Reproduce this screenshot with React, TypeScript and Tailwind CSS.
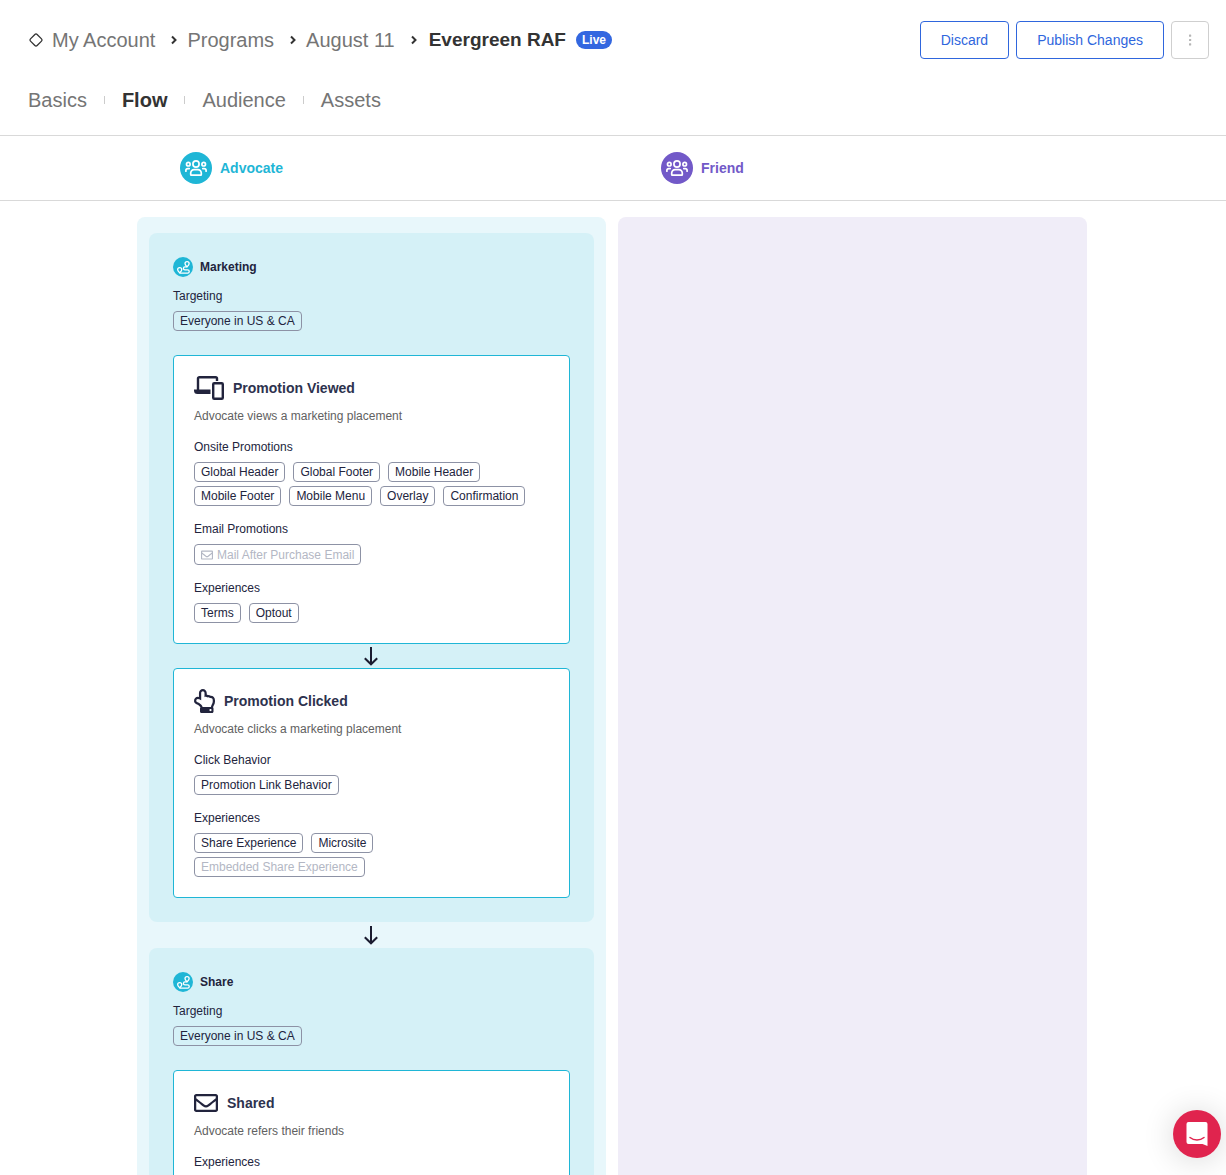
import { type ReactNode } from "react";
import { FaRegEnvelope, FaRegHandPointUp } from "react-icons/fa";
import clsx from "clsx";

type Tag = { label: string; muted?: boolean; mail?: boolean };
type Group = { title: string; tags: Tag[] };
type Step = {
  title: string;
  description: string;
  icon: ReactNode;
  groups: Group[];
};
type Stage = { title: string; targeting: string; steps: Step[] };

const tabs = ["Basics", "Flow", "Audience", "Assets"];

const stages: Stage[] = [
  {
    title: "Marketing",
    targeting: "Everyone in US & CA",
    steps: [
      {
        title: "Promotion Viewed",
        description: "Advocate views a marketing placement",
        icon: <DevicesIcon />,
        groups: [
          {
            title: "Onsite Promotions",
            tags: [
              { label: "Global Header" },
              { label: "Global Footer" },
              { label: "Mobile Header" },
              { label: "Mobile Footer" },
              { label: "Mobile Menu" },
              { label: "Overlay" },
              { label: "Confirmation" },
            ],
          },
          {
            title: "Email Promotions",
            tags: [{ label: "Mail After Purchase Email", muted: true, mail: true }],
          },
          { title: "Experiences", tags: [{ label: "Terms" }, { label: "Optout" }] },
        ],
      },
      {
        title: "Promotion Clicked",
        description: "Advocate clicks a marketing placement",
        icon: <FaRegHandPointUp className="h-6 w-[21px]" />,
        groups: [
          { title: "Click Behavior", tags: [{ label: "Promotion Link Behavior" }] },
          {
            title: "Experiences",
            tags: [
              { label: "Share Experience" },
              { label: "Microsite" },
              { label: "Embedded Share Experience", muted: true },
            ],
          },
        ],
      },
    ],
  },
  {
    title: "Share",
    targeting: "Everyone in US & CA",
    steps: [
      {
        title: "Shared",
        description: "Advocate refers their friends",
        icon: <FaRegEnvelope className="size-6" />,
        groups: [{ title: "Experiences", tags: [] }],
      },
    ],
  },
];

function DevicesIcon() {
  return (
    <svg viewBox="0 0 30 24" className="h-6 w-[30px]" fill="none" stroke="currentColor">
      <path d="M4 15V2.6C4 1.8 4.6 1.2 5.4 1.2h16.2c.8 0 1.4.6 1.4 1.4V5" strokeWidth="2.4" />
      <path d="M0 13.600h16.500V18H3.500A3.500 3.500 0 0 1 0 14.500z" fill="currentColor" stroke="none" />
      <rect x="19.200" y="7.200" width="9.600" height="15.600" rx="1" strokeWidth="2.400" />
    </svg>
  );
}

function UsersIcon() {
  return (
    <svg viewBox="0 0 22 16" className="h-4 w-[22px]" fill="none" stroke="currentColor" strokeWidth="1.700">
      <circle cx="11" cy="4" r="3.100" />
      <circle cx="3.300" cy="4.200" r="1.800" />
      <circle cx="18.700" cy="4.200" r="1.800" />
      <path d="M5.700 14.600V13a3.400 3.400 0 0 1 3.400-3.400h3.800a3.400 3.400 0 0 1 3.400 3.400v1.600c0 .4-.2.600-.6.600H6.300c-.4 0-.6-.2-.6-.600z" />
      <path d="M.9 11.200v-.6a2 2 0 0 1 2-2h1.300M21.100 11.200v-.6a2 2 0 0 0-2-2h-1.300" strokeLinecap="round" />
    </svg>
  );
}

function RouteIcon() {
  return (
    <svg viewBox="0 0 12 12" className="size-[13px]" fill="none" stroke="currentColor" strokeWidth="1.200">
      <path d="M9.300 5.400C8.100 4.100 7.400 3.300 7.400 2.500a1.900 1.900 0 0 1 3.800 0c0 .8-.7 1.600-1.900 2.900z" />
      <path d="M2.500 11C1.300 9.700.6 8.900.6 8.100a1.900 1.900 0 0 1 3.800 0c0 .8-.7 1.600-1.900 2.900z" />
      <path d="M9.300 5.500H7.300a1.300 1.300 0 0 0 0 2.700h2.500a1.500 1.500 0 0 1 0 3H2.500" />
    </svg>
  );
}

function Chevron({ className }: { className?: string }) {
  return (
    <svg viewBox="0 0 6 10" className={clsx("h-2.5 w-1.5 text-[#333]", className)} fill="none" stroke="currentColor" strokeWidth="2">
      <path d="M1 1.500 4.500 5 1 8.500" />
    </svg>
  );
}

function DownArrow({ className }: { className: string }) {
  return (
    <div className={clsx("flex items-center justify-center pr-px text-[#1b1c30]", className)}>
      <svg viewBox="0 0 14 20" className="h-5 w-3.5" fill="none" stroke="currentColor" strokeWidth="2">
        <path d="M7 1v17M.8 12.200 7 18.300l6.200-6.100" />
      </svg>
    </div>
  );
}

function Pill({ label, muted, mail }: Tag) {
  return (
    <button
      type="button"
      className={clsx(
        "flex items-center gap-1 rounded-sm border border-[#8d92a5] px-1.5 text-xs",
        mail ? "h-[21px]" : "h-5",
        muted ? "text-[#b3b7c4]" : "text-[#22243d]"
      )}
    >
      {mail && <FaRegEnvelope className="size-3" />}
      {label}
    </button>
  );
}

function StepCard({ step }: { step: Step }) {
  return (
    <article className="rounded border border-[#1fb6d6] bg-white p-5 text-[#22243d]">
      <div className="flex h-6 items-center gap-[9px]">
        {step.icon}
        <h3 className="text-sm font-bold text-[#2d324e]">{step.title}</h3>
      </div>
      <p className="mt-2 text-xs leading-4 text-[#616161]">{step.description}</p>
      {step.groups.map((group) => (
        <div key={group.title} className="mt-3.5">
          <h4 className="text-xs leading-[18px]">{group.title}</h4>
          <div className="mt-1.5 flex flex-wrap gap-x-2 gap-y-1">
            {group.tags.map((tag) => (
              <Pill key={tag.label} {...tag} />
            ))}
          </div>
        </div>
      ))}
    </article>
  );
}

function StageBlock({ stage }: { stage: Stage }) {
  return (
    <section className="rounded-lg bg-[#d5f1f7] p-6 text-[#22243d]">
      <div className="flex items-center gap-[7px]">
        <span className="flex size-5 items-center justify-center rounded-full bg-[#1fb6d6] text-white">
          <RouteIcon />
        </span>
        <h2 className="text-xs font-bold">{stage.title}</h2>
      </div>
      <p className="mt-2.5 text-xs leading-[18px]">Targeting</p>
      <div className="mt-1.5 mb-6 flex">
        <Pill label={stage.targeting} />
      </div>
      {stage.steps.map((step, index) => (
        <div key={step.title}>
          {index > 0 && <DownArrow className="h-6" />}
          <StepCard step={step} />
        </div>
      ))}
    </section>
  );
}

function Header() {
  return (
    <header className="border-b border-[#d9d9d9] pt-[21px] pr-[17px] pb-5 pl-7">
      <div className="flex items-center justify-between">
        <nav aria-label="Breadcrumb" className="flex items-center text-xl text-[#757575]">
          <svg viewBox="0 0 16 16" className="mr-2 size-4" fill="none" stroke="#333" strokeWidth="1.300">
            <rect x="3.300" y="3.300" width="9.400" height="9.400" rx="1.600" transform="rotate(45 8 8)" />
          </svg>
          <a href="#account">My Account</a>
          <Chevron className="mr-2.5 ml-4" />
          <a href="#programs">Programs</a>
          <Chevron className="mr-2.5 ml-4" />
          <a href="#august">August 11</a>
          <Chevron className="mr-3 ml-4" />
          <h1 className="text-[19px] font-bold text-[#333]">Evergreen RAF</h1>
          <span className="ml-2.5 flex h-[18px] items-center rounded-full bg-[#3367e0] px-1.5 text-xs font-bold text-white">
            Live
          </span>
        </nav>
        <div className="flex gap-[7px] text-sm text-[#2f66dd]">
          <button type="button" className="h-[38px] rounded border border-[#2f66dd] px-5">
            Discard
          </button>
          <button type="button" className="h-[38px] rounded border border-[#2f66dd] px-5">
            Publish Changes
          </button>
          <button
            type="button"
            aria-label="More actions"
            className="flex size-[38px] items-center justify-center rounded border border-[#cfcfcf] text-[#b5b5b5]"
          >
            <svg viewBox="0 0 4 12" className="h-3 w-1" fill="currentColor">
              <rect x="1" y="0.500" width="2.200" height="2.200" rx="0.500" />
              <rect x="1" y="4.900" width="2.200" height="2.200" rx="0.500" />
              <rect x="1" y="9.300" width="2.200" height="2.200" rx="0.500" />
            </svg>
          </button>
        </div>
      </div>
      <nav aria-label="Program sections" className="mt-[26px] flex h-[30px] items-center gap-[17px] text-xl text-[#757575]">
        {tabs.map((tab, index) => (
          <div key={tab} className="flex items-center gap-[17px]">
            {index > 0 && <span className="h-2 w-px bg-[#ccc]" />}
            <a href={`#${tab.toLowerCase()}`} className={clsx(tab === "Flow" && "font-bold text-[#333]")}>
              {tab}
            </a>
          </div>
        ))}
      </nav>
    </header>
  );
}

export default function App() {
  return (
    <div className="flex h-screen flex-col bg-white font-['Helvetica_Neue','Liberation_Sans',Arial,sans-serif]">
      <Header />

      {/* Column headings */}
      <div className="border-b border-[#d9d9d9] pr-0.5">
        <div className="mx-auto grid h-16 max-w-[950px] grid-cols-2 gap-3 text-sm font-bold">
          <div className="flex items-center gap-2 pl-[43px] text-[#1fb6d6]">
            <span className="flex size-8 items-center justify-center rounded-full bg-[#1fb6d6] text-white">
              <UsersIcon />
            </span>
            Advocate
          </div>
          <div className="flex items-center gap-2 pl-[43px] text-[#7259c8]">
            <span className="flex size-8 items-center justify-center rounded-full bg-[#7259c8] text-white">
              <UsersIcon />
            </span>
            Friend
          </div>
        </div>
      </div>

      {/* Flow */}
      <main className="min-h-0 flex-1 overflow-y-auto pt-4 pr-0.5 [scrollbar-width:none]">
        <div className="mx-auto grid max-w-[950px] grid-cols-2 gap-3">
          <div className="rounded-lg bg-[#e8f7fb] px-3 py-4">
            {stages.map((stage, index) => (
              <div key={stage.title}>
                {index > 0 && <DownArrow className="h-[26px]" />}
                <StageBlock stage={stage} />
              </div>
            ))}
          </div>
          <div className="rounded-lg bg-[#f0edf8]" />
        </div>
      </main>

      <button
        type="button"
        aria-label="Open chat"
        className="fixed right-[5px] bottom-[17px] flex size-12 items-center justify-center rounded-full bg-[#e0244e] shadow-[0_2px_32px_rgba(0,0,0,0.16)]"
      >
        <svg viewBox="0 0 22 24" className="h-6 w-[22px]">
          <path d="M2.500 0h17A2 2 0 0 1 21.500 2v22l-5-2H2.500A2 2 0 0 1 .5 20V2A2 2 0 0 1 2.500 0z" fill="#fff" />
          <path d="M4 15.500c4 3.200 10 3.200 14 0" fill="none" stroke="#e0244e" strokeWidth="1.500" strokeLinecap="round" />
        </svg>
      </button>
    </div>
  );
}
